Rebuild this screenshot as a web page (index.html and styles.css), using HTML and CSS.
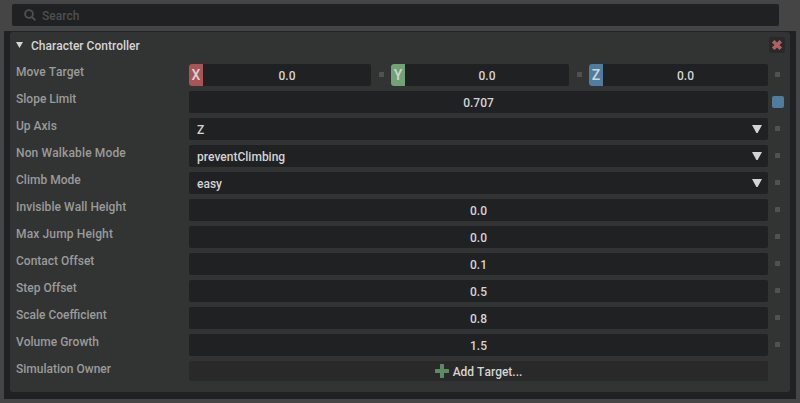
FILE: index.html
```html
<!DOCTYPE html>
<html lang="en">
<head>
<meta charset="utf-8">
<title>Character Controller</title>
<link rel="stylesheet" href="styles.css">
</head>
<body>
<div class="search">
  <svg class="search-icon" width="12" height="12" viewBox="0 0 12 12"><circle cx="5" cy="5" r="3.9"/><path d="M8 8l2.8 2.8"/></svg>
  <span>Search</span>
</div>
<div class="frame">
  <section class="panel">
    <header class="head">
      <svg class="collapse" width="7" height="6" viewBox="0 0 7 6"><path d="M0 0h7L3.5 6z"/></svg>
      <h1>Character Controller</h1>
      <span class="close"><svg width="12" height="12" viewBox="0 0 12 12"><path d="M2.2 2.2l7.6 7.6M9.8 2.2l-7.6 7.6"/></svg></span>
    </header>
    <div class="row"><span class="label">Move Target</span>
      <div class="vector">
        <div class="axis"><b class="tag x">X</b><span class="num">0.0</span></div><i class="dot"></i>
        <div class="axis"><b class="tag y">Y</b><span class="num">0.0</span></div><i class="dot"></i>
        <div class="axis"><b class="tag z">Z</b><span class="num">0.0</span></div>
      </div><span class="state"><i class="dot"></i></span></div>
    <div class="row"><span class="label">Slope Limit</span><div class="field">0.707</div><span class="state"><i class="changed"></i></span></div>
    <div class="row"><span class="label">Up Axis</span><div class="field select">Z<svg width="10" height="8" viewBox="0 0 10 8"><path d="M0 0h10L5.6 8H4.4z"/></svg></div><span class="state"><i class="dot"></i></span></div>
    <div class="row"><span class="label wide">Non Walkable Mode</span><div class="field select">preventClimbing<svg width="10" height="8" viewBox="0 0 10 8"><path d="M0 0h10L5.6 8H4.4z"/></svg></div><span class="state"><i class="dot"></i></span></div>
    <div class="row"><span class="label">Climb Mode</span><div class="field select">easy<svg width="10" height="8" viewBox="0 0 10 8"><path d="M0 0h10L5.6 8H4.4z"/></svg></div><span class="state"><i class="dot"></i></span></div>
    <div class="row"><span class="label slight">Invisible Wall Height</span><div class="field">0.0</div><span class="state"><i class="dot"></i></span></div>
    <div class="row"><span class="label wide">Max Jump Height</span><div class="field">0.0</div><span class="state"><i class="dot"></i></span></div>
    <div class="row"><span class="label">Contact Offset</span><div class="field">0.1</div><span class="state"><i class="dot"></i></span></div>
    <div class="row"><span class="label">Step Offset</span><div class="field">0.5</div><span class="state"><i class="dot"></i></span></div>
    <div class="row"><span class="label">Scale Coefficient</span><div class="field">0.8</div><span class="state"><i class="dot"></i></span></div>
    <div class="row"><span class="label">Volume Growth</span><div class="field">1.5</div><span class="state"><i class="dot"></i></span></div>
    <div class="row"><span class="label">Simulation Owner</span><div class="field add"><svg width="14" height="14" viewBox="0 0 14 14"><path d="M7 1v12M1 7h12"/></svg><span>Add Target...</span></div></div>
  </section>
</div>
</body>
</html>
```

FILE: styles.css
```css
* { box-sizing: border-box; }
body {
  margin: 0;
  height: 403px;
  padding: 4px 4px 0;
  overflow: hidden;
  background: #454545;
  color: #d4d4d4;
  font: 500 12px/14px Roboto, sans-serif;
  font-kerning: none;
}
svg { display: block; flex: none; }
.search {
  display: flex;
  align-items: center;
  width: 767px;
  height: 22px;
  margin: 0 0 5px 8px;
  padding: 2px 0 0 12px;
  gap: 6px;
  border-radius: 2px;
  background: #1f2123;
  color: #4e4f50;
}
.search-icon { margin-top: -2px; fill: none; stroke: #4e4f50; stroke-width: 1.9; stroke-linecap: round; }
.frame { height: 368px; padding: 1px 6px 7px; background: #1f2123; }
.panel { height: 360px; padding: 5px 5px 0 6px; border-radius: 3px; background: #323433; }
.head { display: flex; align-items: center; height: 16px; margin-bottom: 11px; }
.collapse { fill: #d4d4d4; }
.head h1 { flex: 1; margin: 2px 0 0 8px; font: inherit; font-kerning: none; }
.close { padding: 2px; border-radius: 2px; background: #292929; }
.close path { stroke: #b06062; stroke-width: 3.6; }
.row { display: flex; height: 22px; margin-bottom: 5px; }
.label { width: 173px; padding-top: 1px; color: #9a9b9a; }
.slight { letter-spacing: 0.05px; }
.wide { letter-spacing: 0.14px; }
.field {
  width: 579px;
  padding-top: 5px;
  border-radius: 2px;
  background: #1f2123;
  text-align: center;
}
.select { display: flex; justify-content: space-between; padding-left: 8px; padding-right: 6px; }
.select svg { fill: #d4d4d4; margin-top: 2px; }
.state { display: flex; flex: 1; padding: 8px 0 0 7px; }
.dot { width: 5px; height: 5px; flex: none; background: #505150; border-top-left-radius: 1px; }
.changed { width: 12px; height: 12px; flex: none; margin: -3px 0 0 -3px; border-radius: 2px; background: #4f7da0; }
.vector { display: flex; width: 579px; }
.axis { display: flex; width: 182px; height: 22px; border-radius: 3px 2px 2px 3px; overflow: hidden; background: #1f2123; }
.vector > .dot { margin: 8px 7px 0 8px; }
.axis:nth-child(3) { width: 178px; }
.axis:nth-child(5) { width: 179px; }
.tag { width: 14px; padding-top: 4px; font-size: 14px; font-weight: 500; text-align: center; }
.x { background: #aa5555; }
.y { background: #71a376; }
.z { background: #4f7da0; }
.num { flex: 1; padding-top: 5px; text-align: center; }
.add { display: flex; justify-content: center; height: 20px; padding-top: 3px; gap: 4px; background: #292929; }
.add path { stroke: #5b8a63; stroke-width: 4; stroke-linecap: round; }
.add span { padding-top: 1px; }
```
